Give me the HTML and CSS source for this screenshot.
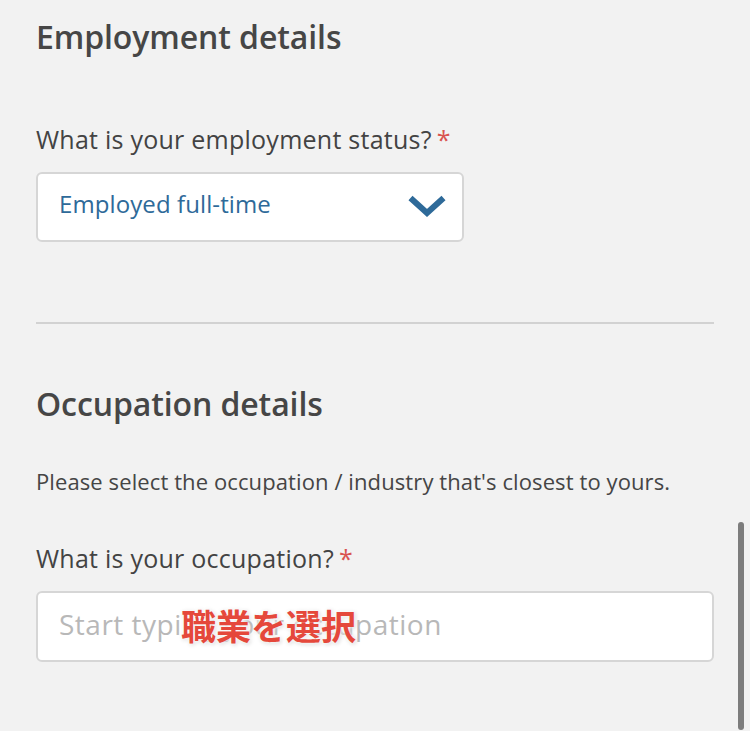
FILE: index.html
```html
<!DOCTYPE html>
<html lang="en">
<head>
<meta charset="utf-8">
<title>Employment details</title>
<link rel="stylesheet" href="styles.css">
</head>
<body>
<main class="page">
  <section class="section">
    <h1 class="section-title">Employment details</h1>
    <label class="field-label">What is your employment status?<span class="req">*</span></label>
    <div class="select">
      <span class="select-value">Employed full-time</span>
      <svg class="chevron" width="42" height="26" viewBox="0 0 42 26" aria-hidden="true">
        <polyline points="4.5,6 21,21 37.5,6" fill="none" stroke="#2e6a99" stroke-width="6" stroke-linejoin="miter" stroke-linecap="butt"/>
      </svg>
    </div>
  </section>
  <hr class="divider">
  <section class="section">
    <h2 class="section-title title-2">Occupation details</h2>
    <p class="hint">Please select the occupation / industry that's closest to yours.</p>
    <label class="field-label label-2">What is your occupation?<span class="req">*</span></label>
    <div class="input">
      <span class="placeholder">Start typing your occupation</span>
      <span class="overlay">職業を選択</span>
    </div>
  </section>
</main>
<div class="scrollbar"></div>
</body>
</html>
```

FILE: styles.css
```css
html, body {
  margin: 0;
  padding: 0;
  background: #f2f2f2;
  height: 100%;
  overflow: hidden;
}
body {
  font-family: "Open Sans", "Noto Sans", sans-serif;
  color: #444;
}
.page {
  padding: 0 36px;
}
.section-title {
  margin: 0;
  padding-top: 17px;
  font-size: 32px;
  line-height: 40px;
  font-weight: 600;
  color: #464646;
  letter-spacing: -0.1px;
}
.title-2 {
  padding-top: 0;
  margin-top: 60px;
}
.field-label {
  display: block;
  margin-top: 66px;
  font-size: 25px;
  line-height: 32px;
  color: #434343;
  letter-spacing: 0.25px;
}
.label-2 {
  margin-top: 46px;
}
.req {
  color: #d9534f;
  margin-left: 5px;
}
.select {
  margin-top: 17px;
  width: 428px;
  height: 70px;
  box-sizing: border-box;
  background: #fff;
  border: 2px solid #d6d6d6;
  border-radius: 6px;
  display: flex;
  align-items: center;
  justify-content: space-between;
  padding: 0 14px 0 21px;
}
.select-value {
  font-size: 24px;
  line-height: 32px;
  margin-bottom: 6px;
  color: #2e6a99;
  letter-spacing: 0.1px;
}
.chevron {
  display: block;
  margin-bottom: 4px;
}
.divider {
  margin: 80px 0 0;
  border: 0;
  height: 2px;
  background: #d2d2d2;
}
.hint {
  margin: 42px 0 0;
  font-size: 22px;
  line-height: 30px;
  color: #454545;
  letter-spacing: 0.1px;
}
.input {
  position: relative;
  margin-top: 17px;
  height: 71px;
  box-sizing: border-box;
  background: #fff;
  border: 2px solid #d6d6d6;
  border-radius: 6px;
  display: flex;
  align-items: center;
  padding: 0 21px;
}
.placeholder {
  font-size: 28px;
  line-height: 36px;
  margin-bottom: 6px;
  color: #b8b8b8;
  letter-spacing: 0.5px;
}
.overlay {
  position: absolute;
  left: 143px;
  top: 50%;
  transform: translateY(-50%);
  margin-top: -3px;
  font-family: "Noto Sans CJK JP", sans-serif;
  font-weight: 700;
  font-size: 35px;
  line-height: 1;
  color: #e5483b;
  text-shadow: 0 0 3px #fff, 0 0 6px #fff, 1px 1px 4px rgba(0,0,0,0.25);
}
.scrollbar {
  position: fixed;
  right: 6px;
  top: 522px;
  width: 6px;
  height: 208px;
  border-radius: 3px;
  background: #7d7d7d;
}
```
